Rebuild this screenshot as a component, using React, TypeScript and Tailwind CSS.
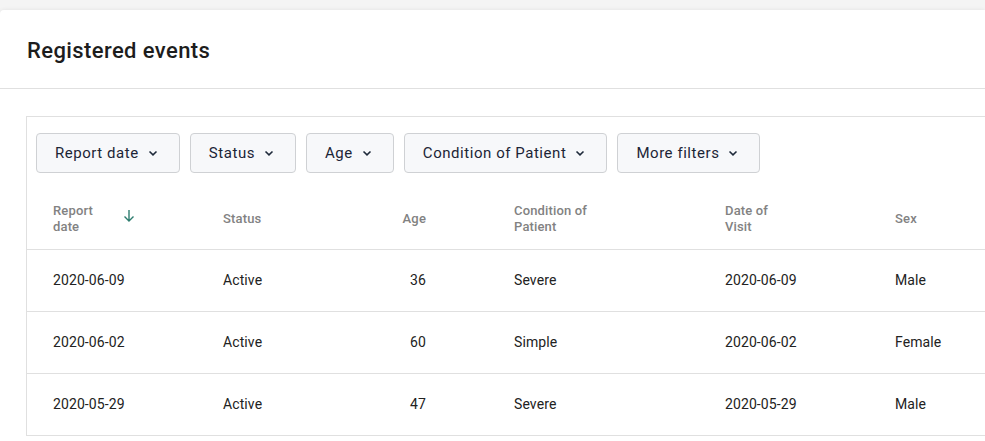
import { FC } from 'react'

const filters = ['Report date', 'Status', 'Age', 'Condition of Patient', 'More filters']

const rows = [
  { date: '2020-06-09', status: 'Active', age: 36, condition: 'Severe', visit: '2020-06-09', sex: 'Male' },
  { date: '2020-06-02', status: 'Active', age: 60, condition: 'Simple', visit: '2020-06-02', sex: 'Female' },
  { date: '2020-05-29', status: 'Active', age: 47, condition: 'Severe', visit: '2020-05-29', sex: 'Male' },
]

const cols = 'grid grid-cols-[170px_140px_151px_211px_170px_1fr] pl-[26px]'

const Chevron: FC = () => (
  <svg width="10" height="10" viewBox="0 0 10 10" fill="none">
    <path d="M1.5 3.5 5 6.8 8.5 3.5" stroke="#1f2a3a" strokeWidth="1.6" />
  </svg>
)

const SortArrow: FC = () => (
  <svg width="12" height="14" viewBox="0 0 12 14" fill="none">
    <path d="M6 1v11M1.5 7.5 6 12l4.5-4.5" stroke="#2e7d6f" strokeWidth="1.4" />
  </svg>
)

const App: FC = () => {
  return (
    <div className="min-h-[441px] bg-[#f4f4f4] pt-[10px] overflow-hidden font-['Roboto',sans-serif]">
      <div className="bg-white rounded-tl-[4px] shadow-[0_0_4px_rgba(0,0,0,0.08)] min-h-[431px]">
        <div className="h-[79px] border-b border-[#e0e0e0] pl-[27px] flex items-center">
          <h1 className="text-[22px] font-medium text-[#1d1d1d] tracking-[0.4px] pt-[3px]">Registered events</h1>
        </div>
        <div className="pt-[27px] pl-[26px]">
          <div className="border-l border-t border-[#e0e0e0] w-[1000px]">
            <div className="flex gap-[10px] pl-[9px] pt-[16px]">
              {filters.map(f => (
                <button
                  key={f}
                  className="h-[40px] pl-[18px] pr-[21px] flex items-center gap-[9px] bg-[#f7f8fa] border border-[#cfd1d4] rounded-[4px] text-[15px] text-[#1c2536] tracking-[0.55px]"
                >
                  {f}
                  <Chevron />
                </button>
              ))}
            </div>
            <div className={`${cols} h-[77px] items-center border-b border-[#e0e0e0] text-[13px] font-medium text-[#828282] leading-[16px] tracking-[0.15px] pt-[15px]`}>
              <div className="flex items-center">
                <span className="w-[70px]">
                  Report
                  <br />
                  date
                </span>
                <span className="mt-[-6px]">
                  <SortArrow />
                </span>
              </div>
              <div>Status</div>
              <div className="text-right pr-[88px]">Age</div>
              <div>
                Condition of
                <br />
                Patient
              </div>
              <div>
                Date of
                <br />
                Visit
              </div>
              <div>Sex</div>
            </div>
            {rows.map(r => (
              <div
                key={r.date}
                className={`${cols} h-[62px] items-center border-b border-[#e0e0e0] text-[14px] text-[#222] tracking-[0.1px]`}
              >
                <div>{r.date}</div>
                <div>{r.status}</div>
                <div className="text-right pr-[88px]">{r.age}</div>
                <div>{r.condition}</div>
                <div>{r.visit}</div>
                <div>{r.sex}</div>
              </div>
            ))}
          </div>
        </div>
      </div>
    </div>
  )
}

export default App
